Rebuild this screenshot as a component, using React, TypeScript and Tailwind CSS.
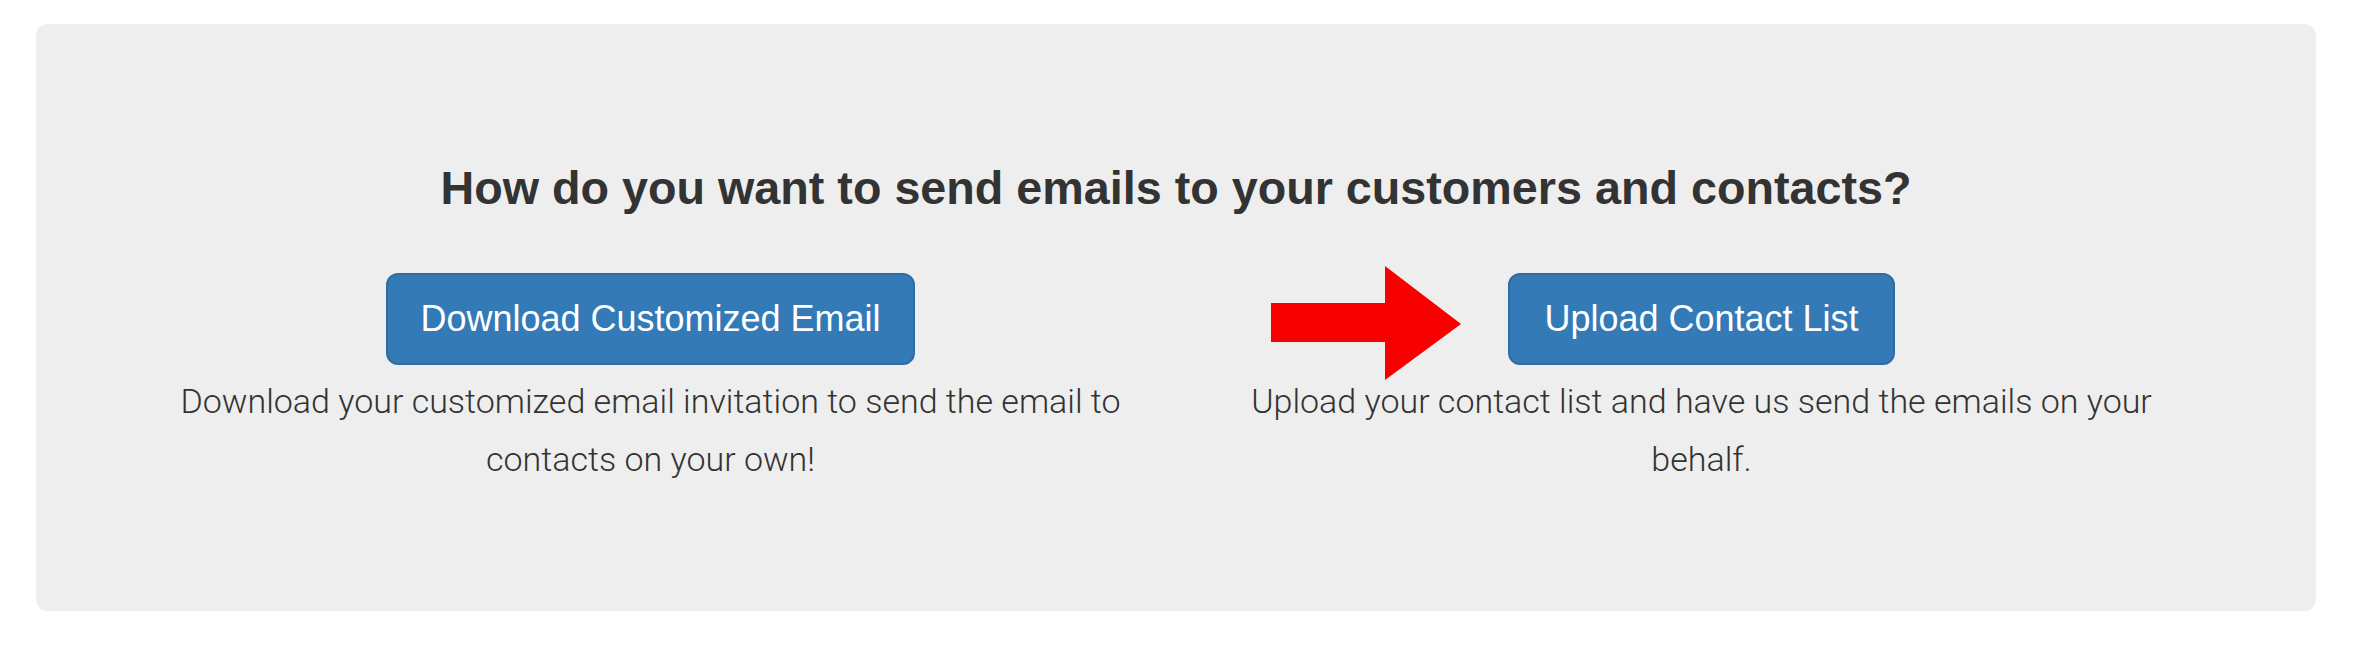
export default function App() {
  return (
    <div className="min-h-screen bg-white pt-[24px] pl-[36px]">
      <div className="w-[2280px] h-[587px] rounded-[12px] bg-[#eeeeee] px-[89px] pt-[138px] text-[#333333]">
        <h3
          className="text-center text-[46.7px] leading-[52.8px] font-bold"
          style={{ fontFamily: '"Liberation Sans", Arial, sans-serif' }}
        >
          How do you want to send emails to your customers and contacts?
        </h3>
        <div className="grid grid-cols-2 mt-[58px]">
          <div className="flex flex-col items-center text-center">
            <button
              className="border-2 border-[#2e6da4] bg-[#337ab7] text-white rounded-[12px] px-[32px] py-[20px] text-[36px] leading-[48px]"
              style={{ fontFamily: '"Liberation Sans", Arial, sans-serif' }}
            >
              Download Customized Email
            </button>
            <p
              className="mt-[7px] text-[34px] leading-[58px] font-light"
              style={{ fontFamily: 'Roboto, "Noto Sans", sans-serif' }}
            >
              Download your customized email invitation to send the email to
              <br />
              contacts on your own!
            </p>
          </div>
          <div className="relative flex flex-col items-center text-center">
            <svg
              className="absolute left-[95px] top-[-7px]"
              width="190"
              height="114"
              viewBox="0 0 190 114"
            >
              <polygon
                points="0,37 114,37 114,0 190,58 114,114 114,76 0,76"
                fill="#f80000"
              />
            </svg>
            <button
              className="border-2 border-[#2e6da4] bg-[#337ab7] text-white rounded-[12px] px-[34px] py-[20px] text-[36px] leading-[48px]"
              style={{ fontFamily: '"Liberation Sans", Arial, sans-serif' }}
            >
              Upload Contact List
            </button>
            <p
              className="mt-[7px] text-[34px] leading-[58px] font-light"
              style={{ fontFamily: 'Roboto, "Noto Sans", sans-serif' }}
            >
              Upload your contact list and have us send the emails on your
              <br />
              behalf.
            </p>
          </div>
        </div>
      </div>
    </div>
  );
}
